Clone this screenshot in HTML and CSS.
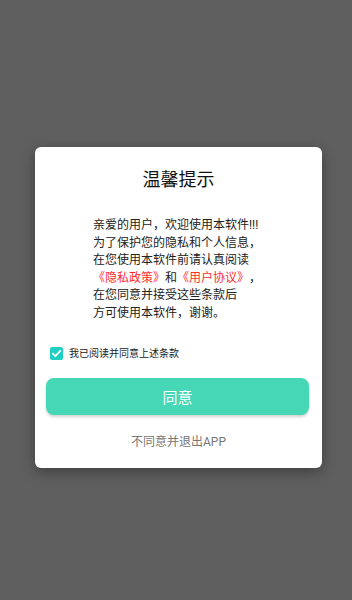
FILE: index.html
```html
<!DOCTYPE html>
<html lang="zh-CN">
<head>
<meta charset="utf-8">
<link rel="stylesheet" href="styles.css">
</head>
<body>
<div class="screen">
  <div class="dialog">
    <h1 class="title">温馨提示</h1>
    <div class="content">
      <p>亲爱的用户，欢迎使用本软件!!!</p>
      <p>为了保护您的隐私和个人信息，</p>
      <p>在您使用本软件前请认真阅读</p>
      <p><span class="link">《隐私政策》</span>和<span class="link">《用户协议》</span>，</p>
      <p>在您同意并接受这些条款后</p>
      <p>方可使用本软件，谢谢。</p>
    </div>
    <label class="agree">
      <span class="check"><svg viewBox="0 0 13 13" width="13" height="13"><path d="M2.8 6.7 L5.4 9.1 L10.2 3.9" fill="none" stroke="#fff" stroke-width="1.8" stroke-linecap="round" stroke-linejoin="round"/></svg></span>
      <span class="agree-text">我已阅读并同意上述条款</span>
    </label>
    <button class="btn">同意</button>
    <div class="exit">不同意并退出APP</div>
  </div>
</div>
</body>
</html>
```

FILE: styles.css
```css
html, body {
  margin: 0;
  padding: 0;
}
body {
  background: #5f5f5f;
  font-family: "Roboto", "Noto Sans CJK SC", sans-serif;
  text-spacing-trim: space-all;
}
.screen {
  width: 352px;
  height: 600px;
  padding-top: 147px;
  box-sizing: border-box;
}
.dialog {
  margin-left: 35px;
  width: 287px;
  height: 321px;
  box-sizing: border-box;
  background: #fff;
  border-radius: 6px;
  box-shadow: 0 4px 14px rgba(0, 0, 0, 0.35);
  padding-top: 21px;
  display: flex;
  flex-direction: column;
}
.title {
  margin: 0;
  font-size: 18px;
  line-height: 24px;
  font-weight: 400;
  color: #111;
  text-align: center;
}
.content {
  margin-top: 25px;
  padding-left: 58px;
  font-size: 12px;
  line-height: 17.6px;
  color: #222;
}
.content p {
  margin: 0;
  white-space: nowrap;
}
.link {
  color: #ff2d2d;
}
.agree {
  margin-top: 24px;
  margin-left: 15px;
  display: flex;
  align-items: center;
  height: 13px;
}
.check {
  width: 13px;
  height: 13px;
  border-radius: 2px;
  background: #1fd0c2;
  display: flex;
}
.agree-text {
  margin-left: 6px;
  font-size: 10px;
  line-height: 13px;
  color: #222;
}
.btn {
  margin-top: 18px;
  margin-left: 11px;
  width: 263px;
  height: 37px;
  border: none;
  border-radius: 8px;
  background: #46d7b6;
  color: #fff;
  font-family: "Roboto", "Noto Sans CJK SC", sans-serif;
  font-size: 15px;
  padding: 0;
  box-shadow: 0 2px 3px rgba(0, 0, 0, 0.18);
}
.exit {
  margin-top: 19px;
  text-align: center;
  font-size: 12px;
  line-height: 17px;
  color: #777;
}
```
